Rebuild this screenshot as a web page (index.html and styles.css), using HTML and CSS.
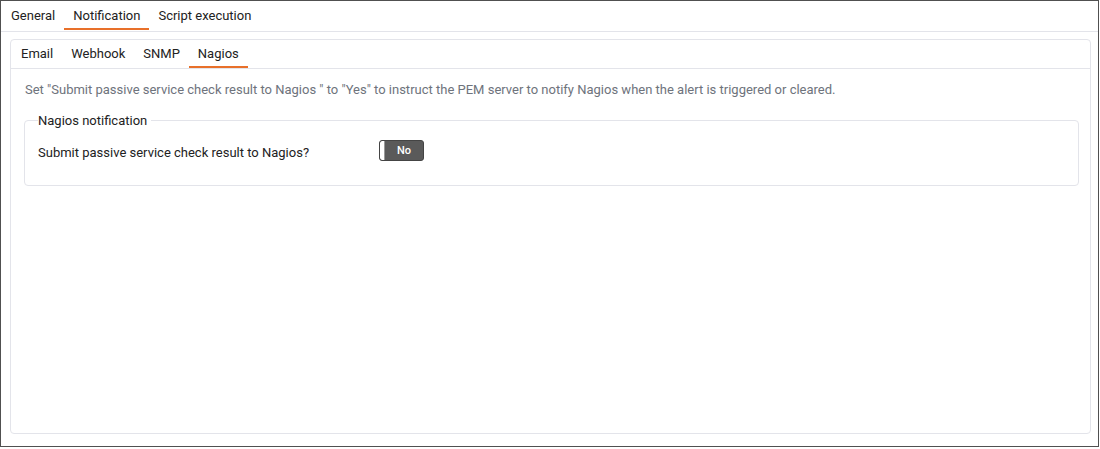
FILE: index.html
```html
<!DOCTYPE html>
<html>
<head>
<meta charset="utf-8">
<link rel="stylesheet" href="styles.css">
</head>
<body>
<div class="frame">
  <div class="tabs top-tabs">
    <div class="tab">General</div>
    <div class="tab active">Notification</div>
    <div class="tab">Script execution</div>
  </div>
  <div class="card">
    <div class="tabs inner-tabs">
      <div class="tab">Email</div>
      <div class="tab">Webhook</div>
      <div class="tab">SNMP</div>
      <div class="tab active">Nagios</div>
    </div>
    <div class="card-body">
      <p class="desc">Set "Submit passive service check result to Nagios " to "Yes" to instruct the PEM server to notify Nagios when the alert is triggered or cleared.</p>
      <fieldset class="group">
        <legend>Nagios notification</legend>
        <div class="row">
          <label class="label">Submit passive service check result to Nagios?</label>
          <div class="toggle"><span class="handle"></span><span class="state">No</span></div>
        </div>
      </fieldset>
    </div>
  </div>
</div>
</body>
</html>
```
FILE: styles.css
```css
* { box-sizing: border-box; }
html, body { margin: 0; padding: 0; background: #fff; }
body {
  font-family: Roboto, "Liberation Sans", sans-serif;
  font-size: 13px;
  color: #222;
  width: 1100px;
  height: 449px;
}
.frame {
  width: 1099px;
  height: 447px;
  border: 1px solid #505050;
  display: flex;
  flex-direction: column;
}
.tabs {
  display: flex;
  border-bottom: 1px solid #e3e4ea;
}
.top-tabs {
  height: 31px;
  padding-left: 1px;
}
.tab {
  position: relative;
  padding: 0 9px;
  line-height: 28px;
  color: #222;
  font-size: 13px;
}
.tab.active::after {
  content: "";
  position: absolute;
  left: 0;
  right: 0;
  bottom: 0;
  height: 2px;
  background: #e8702a;
}
.top-tabs .tab { padding-top: 1px; }
.top-tabs .tab.active::after { bottom: 1px; }
.card {
  margin: 7px 7px 12px 9px;
  flex: 1;
  border: 1px solid #e3e4ea;
  border-radius: 4px;
  display: flex;
  flex-direction: column;
}
.inner-tabs {
  height: 29px;
  padding-left: 1px;
}
.inner-tabs .tab { line-height: 27px; }
.card-body {
  padding: 0 11px 0 13px;
}
.desc {
  margin: 13px 0 0 1px;
  color: #6e737c;
  font-size: 13px;
  line-height: 16px;
}
.group {
  margin: 15px 0 0 0;
  border: 1px solid #e3e4ea;
  border-radius: 4px;
  padding: 12px 13px 24px 13px;
  min-width: 0;
}
.group legend {
  padding: 0 4px 0 0;
  margin-left: 0;
  font-size: 13px;
  color: #222;
}
.row {
  display: flex;
  align-items: center;
}
.label {
  width: 341px;
  font-size: 13px;
  color: #222;
  padding-top: 3px;
}
.toggle {
  width: 45px;
  height: 21px;
  background: #5a5a5a;
  border: 1px solid #444;
  border-radius: 3px;
  display: flex;
  align-items: center;
  overflow: hidden;
}
.handle {
  width: 5px;
  height: 100%;
  background: #fff;
  border-right: 1px solid #999;
  border-radius: 2px 0 0 2px;
}
.state {
  flex: 1;
  text-align: center;
  color: #fff;
  font-size: 11px;
  font-weight: 500;
}
```
